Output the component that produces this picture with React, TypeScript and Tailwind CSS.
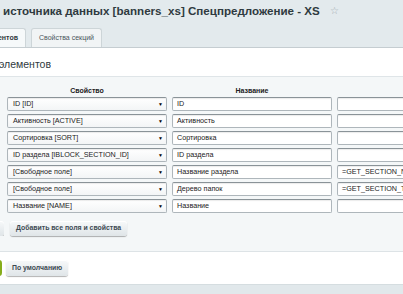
import React from "react";

const rows: [string, string, string][] = [
  ["ID [ID]", "ID", ""],
  ["Активность [ACTIVE]", "Активность", ""],
  ["Сортировка [SORT]", "Сортировка", ""],
  ["ID раздела [IBLOCK_SECTION_ID]", "ID раздела", ""],
  ["[Свободное поле]", "Название раздела", "=GET_SECTION_NAME"],
  ["[Свободное поле]", "Дерево папок", "=GET_SECTION_TREE"],
  ["Название [NAME]", "Название", ""],
];

const inputCls =
  "shrink-0 h-[14px] bg-white border border-[#aeb6bb] border-t-[#8a9398] rounded-[2px] shadow-[inset_0_1px_1px_rgba(0,0,0,0.08)] flex items-center px-[4px] text-[7.2px] leading-none text-[#222] whitespace-nowrap overflow-hidden";

const btnCls =
  "h-[15px] px-[6px] rounded-[3px] bg-[linear-gradient(#f7f9fa,#dfe5e8)] shadow-[0_1px_1px_rgba(0,0,0,0.3),inset_0_1px_0_#fff] flex items-center text-[6.9px] font-bold text-[#3d4a52] whitespace-nowrap shrink-0";

export default function App() {
  return (
    <div className="w-[403px] h-[294px] overflow-hidden bg-[#e3eaed] font-['Liberation_Sans',Arial,sans-serif] flex flex-col">
      {/* title */}
      <div className="h-[28px] shrink-0 pl-[3px] pt-[3px] flex items-start gap-[10px]">
        <span className="text-[11.6px] leading-[16px] font-bold text-[#2f3a40] whitespace-nowrap">
          источника данных [banners_xs] Спецпредложение - XS
        </span>
        <span className="text-[10px] leading-[16px] text-[#a3adb3]">☆</span>
      </div>
      {/* tabs */}
      <div className="h-[19px] shrink-0 flex items-end gap-[5px]">
        <div className="w-[26px] h-full overflow-hidden flex justify-end shrink-0">
          <div className="shrink-0 h-full px-[7px] flex items-center bg-[#f6f9fa] border border-b-0 border-[#cdd5d8] rounded-t-[3px] text-[7px] font-bold text-[#2f3a40] whitespace-nowrap">
            Свойства элементов
          </div>
        </div>
        <div className="h-full px-[7px] flex items-center bg-[#f1f4f5] border border-b-0 border-[#cdd5d8] rounded-t-[3px] text-[7px] text-[#4a555c] whitespace-nowrap">
          Свойства секций
        </div>
      </div>
      {/* content */}
      <div className="flex-1 flex flex-col bg-white border-t border-[#c5cdd1]">
        <div className="h-[29px] shrink-0 pt-[10px] border-b border-[#dfe5e8]">
          <div className="w-[51px] overflow-hidden flex justify-end">
            <span className="shrink-0 text-[10.5px] leading-[12px] text-[#2f3a40] whitespace-nowrap">
              Свойства элементов
            </span>
          </div>
        </div>
        <div className="h-[175px] shrink-0 bg-[#f4f7f8] border-b border-[#dde3e6] flex flex-col">
          <div className="flex gap-[5px] pl-[7px] pt-[10px] h-[20px] shrink-0">
            <div className="shrink-0 w-[160px] text-center text-[7px] leading-[8px] font-bold text-[#222]">Свойство</div>
            <div className="shrink-0 w-[160px] text-center text-[7px] leading-[8px] font-bold text-[#222]">Название</div>
          </div>
          <div className="flex flex-col gap-[3px] pl-[7px]">
            {rows.map((r, i) => (
              <div key={i} className="flex gap-[5px]">
                <div className={inputCls + " w-[160px] justify-between bg-[linear-gradient(#ffffff,#f3f5f6)] pl-[5px] pr-[3px]"}>
                  <span>{r[0]}</span>
                  <span className="text-[5px] text-black">▼</span>
                </div>
                <div className={inputCls + " w-[160px]"}>{r[1]}</div>
                <div className={inputCls + " w-[160px] px-[2px]"}>{r[2]}</div>
              </div>
            ))}
          </div>
          <div className="flex gap-[6px] mt-[8px]">
            <div className="w-[4px] overflow-hidden flex justify-end shrink-0">
              <div className={btnCls}>Добавить поле</div>
            </div>
            <div className={btnCls}>Добавить все поля и свойства</div>
          </div>
        </div>
        <div className="h-[32px] shrink-0 pt-[8px] flex gap-[4px] items-start">
          <div className="w-[2px] overflow-hidden flex justify-end shrink-0">
            <div className="h-[16px] px-[7px] rounded-[3px] bg-[#86ad1b] flex items-center text-[7px] font-bold text-white whitespace-nowrap shrink-0">
              Сохранить
            </div>
          </div>
          <div className={btnCls + " h-[16px]"}>По умолчанию</div>
        </div>
        <div className="flex-1 bg-[#e1e8eb] border-t border-[#d5dde0]" />
      </div>
    </div>
  );
}
